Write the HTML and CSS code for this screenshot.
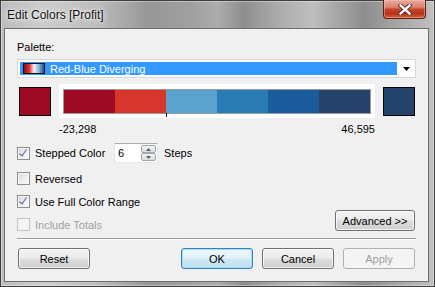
FILE: index.html
```html
<!DOCTYPE html>
<html lang="en">
<head>
    <meta charset="UTF-8">
    <title>Edit Colors [Profit]</title>
    <link rel="stylesheet" href="styles.css">
</head>
<body>
    <div class="window">
        <div class="titlebar">
            <span class="title">Edit Colors [Profit]</span>
            <div class="close-btn">
                <svg width="14" height="11" viewBox="0 0 14 11">
                    <path d="M2.5 1.5 L11.5 9.5 M11.5 1.5 L2.5 9.5" stroke="#4a1f18" stroke-width="4.2" stroke-linecap="square"/>
                    <path d="M2.5 1.5 L11.5 9.5 M11.5 1.5 L2.5 9.5" stroke="#ffffff" stroke-width="2.4" stroke-linecap="square"/>
                </svg>
            </div>
        </div>

        <div class="client">
            <div class="field-label">Palette:</div>

            <div class="select">
                <div class="select-value">
                    <span class="ramp"></span>
                    <span>Red-Blue Diverging</span>
                </div>
                <div class="select-arrow">
                    <svg width="7" height="4" viewBox="0 0 7 4"><path d="M0 0 H7 L3.5 4 Z" fill="#000"/></svg>
                </div>
            </div>

            <div class="color-row">
                <div class="swatch swatch-start"></div>
                <div class="bar-frame">
                    <div class="bar">
                        <span class="step s1"></span>
                        <span class="step s2"></span>
                        <span class="step s3"></span>
                        <span class="step s4"></span>
                        <span class="step s5"></span>
                        <span class="step s6"></span>
                    </div>
                    <div class="center-tick"></div>
                </div>
                <div class="swatch swatch-end"></div>
            </div>

            <div class="range-labels">
                <span>-23,298</span>
                <span>46,595</span>
            </div>

            <div class="option-row stepped-row">
                <label class="check stepped-check">
                    <span class="box checked"></span>
                    <span>Stepped Color</span>
                </label>
                <div class="spinner">
                    <span class="spinner-value">6</span>
                    <div class="spin-buttons">
                        <span class="spin-btn">
                            <svg width="5" height="3" viewBox="0 0 5 3"><path d="M0 3 L2.5 0 L5 3 Z" fill="#4d6185"/></svg>
                        </span>
                        <span class="spin-btn">
                            <svg width="5" height="3" viewBox="0 0 5 3"><path d="M0 0 H5 L2.5 3 Z" fill="#4d6185"/></svg>
                        </span>
                    </div>
                </div>
                <span class="steps-label">Steps</span>
            </div>

            <div class="option-row">
                <label class="check">
                    <span class="box"></span>
                    <span>Reversed</span>
                </label>
            </div>

            <div class="option-row">
                <label class="check">
                    <span class="box checked"></span>
                    <span>Use Full Color Range</span>
                </label>
            </div>

            <div class="option-row totals-row">
                <label class="check disabled">
                    <span class="box"></span>
                    <span>Include Totals</span>
                </label>
                <button class="btn advanced-btn">Advanced &gt;&gt;</button>
            </div>

            <div class="separator"></div>

            <div class="footer">
                <button class="btn">Reset</button>
                <div class="footer-right">
                    <button class="btn btn-default">OK</button>
                    <button class="btn">Cancel</button>
                    <button class="btn" disabled>Apply</button>
                </div>
            </div>
        </div>
    </div>
</body>
</html>
```

FILE: styles.css
```css
* {
    margin: 0;
    padding: 0;
    box-sizing: border-box;
}

body {
    width: 435px;
    height: 287px;
    overflow: hidden;
    font-family: 'Liberation Sans', Arial, sans-serif;
    font-size: 11px;
    color: #000;
}

.window {
    width: 435px;
    height: 287px;
    border: 1px solid #3e3e3e;
    padding: 0 5px 0 3px;
    background: linear-gradient(90deg, #bcbcbc 0%, #cdcdcd 10%, #bdbdbd 22%, #979797 34%, #a0a0a0 44%, #acacac 50%, #8e8e8e 56%, #ababab 64%, #bebebe 72%, #a4a4a4 78%, #8d8d8d 84%, #a8a8a8 92%, #c0c0c0 100%);
    box-shadow: inset 0 0 0 1px rgba(255, 255, 255, 0.35);
}

/* title bar */
.titlebar {
    height: 27px;
    display: flex;
    justify-content: space-between;
    align-items: flex-start;
}

.title {
    margin: 7px 0 0 3px;
    font-size: 12px;
    line-height: 14px;
    color: #111;
    text-shadow: 0 0 6px #fff, 0 0 3px #fff;
}

.close-btn {
    width: 43px;
    height: 19px;
    margin: -1px 3px 0 0;
    border: 1px solid #5e1c12;
    border-top: none;
    border-radius: 0 0 4px 4px;
    background: linear-gradient(180deg, #e9ab9c 0%, #d98370 40%, #c6432a 52%, #b8321a 75%, #d1603f 100%);
    box-shadow: inset 0 0 0 1px rgba(255, 200, 180, 0.45);
    display: flex;
    align-items: center;
    justify-content: center;
}

/* client area */
.client {
    height: 254px;
    border: 1px solid #6e6e6e;
    background: #f0f0f0;
    padding: 0 12px;
    display: flex;
    flex-direction: column;
}

.field-label {
    margin-top: 11px;
    height: 15px;
    line-height: 15px;
}

.select {
    margin-top: 4px;
    height: 19px;
    border: 1px solid #d8d8d8;
    background: #fff;
    display: flex;
    padding: 2px 0 2px 2px;
}

.select-value {
    flex: 1;
    background: #3399ff;
    color: #fff;
    display: flex;
    align-items: center;
}

.ramp {
    width: 22px;
    height: 11px;
    margin: 0 5px 0 3px;
    border: 1px solid #111;
    background: linear-gradient(90deg, #8a0a14 0%, #e03a36 28%, #fbeeee 50%, #8cbcdc 72%, #1e4f8c 100%);
}

.select-arrow {
    width: 18px;
    display: flex;
    align-items: center;
    justify-content: center;
    padding-left: 1px;
}

/* colour ramp */
.color-row {
    margin-top: 6px;
    padding: 0 1px 0 2px;
    display: flex;
    align-items: center;
    gap: 8px;
}

.swatch {
    width: 32px;
    height: 29px;
    border: 1px solid #000;
}

.swatch-start {
    background: #9d0a26;
}

.swatch-end {
    background: #24436b;
}

.bar-frame {
    position: relative;
    width: 316px;
    height: 34px;
    background: #fff;
    padding: 5px 4px 4px;
}

.bar {
    height: 25px;
    display: flex;
    border: 1px solid #9a9a9a;
}

.step {
    flex: 1;
}

.s1 { background: #9e0a26; }
.s2 { background: #d8352c; }
.s3 { background: #5ba3cf; }
.s4 { background: #2b7bb5; }
.s5 { background: #1b5c9c; }
.s6 { background: #25436b; }

.center-tick {
    position: absolute;
    left: 107px;
    top: 29px;
    width: 1px;
    height: 4px;
    background: #000;
}

.range-labels {
    margin: 4px 0 0 42px;
    width: 316px;
    display: flex;
    justify-content: space-between;
    height: 15px;
    line-height: 15px;
}

/* options */
.option-row {
    height: 23px;
    display: flex;
    align-items: center;
}

.stepped-row {
    margin-top: 6px;
    height: 20px;
    margin-bottom: 4px;
}

.check {
    display: flex;
    align-items: center;
    gap: 5px;
}

.stepped-check {
    width: 97px;
}

.box {
    width: 13px;
    height: 13px;
    border: 1px solid #8e8f8f;
    background: linear-gradient(135deg, #d4d7dc 0%, #f4f4f4 70%, #fbfbfb 100%);
    box-shadow: inset 0 0 0 1px #f5f5f5;
    position: relative;
}

.box.checked::after {
    content: "";
    position: absolute;
    left: 3px;
    top: 0px;
    width: 3px;
    height: 7px;
    border: solid #5a6f9e;
    border-width: 0 1.5px 1.5px 0;
    transform: rotate(35deg);
}

.check.disabled {
    color: #a0a0a0;
}

.check.disabled .box {
    border-color: #c4c4c4;
    background: #f4f4f4;
    box-shadow: none;
}

.spinner {
    width: 44px;
    height: 20px;
    background: #fff;
    border: 1px solid #abadb3;
    border-color: #abadb3 #e3e9ef #e3e9ef #e2e3ea;
    display: flex;
    align-items: center;
    padding: 1px 1px 1px 3px;
}

.spinner-value {
    flex: 1;
}

.spin-buttons {
    width: 15px;
    height: 16px;
    display: flex;
    flex-direction: column;
}

.spin-btn {
    flex: 1;
    border: 1px solid #a6a6a6;
    border-radius: 2px;
    background: linear-gradient(180deg, #f4f4f4, #dcdcdc);
    display: flex;
    align-items: center;
    justify-content: center;
}

.steps-label {
    margin-left: 6px;
}

.totals-row {
    justify-content: space-between;
}

/* buttons */
.btn {
    width: 72px;
    height: 21px;
    border: 1px solid #707070;
    border-radius: 3px;
    background: linear-gradient(180deg, #f2f2f2 0%, #ebebeb 48%, #dddddd 52%, #cfcfcf 100%);
    box-shadow: inset 0 0 0 1px rgba(255, 255, 255, 0.7);
    font-family: inherit;
    font-size: 11px;
    color: #000;
}

.btn:disabled {
    border-color: #adb2b5;
    background: #f4f4f4;
    color: #a0a0a0;
    box-shadow: none;
}

.btn-default {
    border-color: #3c7fb1;
    box-shadow: inset 0 0 0 1px #9ee0f9;
    background: linear-gradient(180deg, #edf7fc 0%, #e3f1f9 48%, #cfe8f5 52%, #bfdfef 100%);
}

.advanced-btn {
    width: 80px;
    margin: -8px 1px 0 0;
}

.separator {
    margin-top: 2px;
    height: 2px;
    border-top: 1px solid #a0a0a0;
    border-bottom: 1px solid #ffffff;
}

.footer {
    margin-top: 8px;
    padding: 0 1px;
    display: flex;
    justify-content: space-between;
}

.footer-right {
    display: flex;
    gap: 9px;
}
```
